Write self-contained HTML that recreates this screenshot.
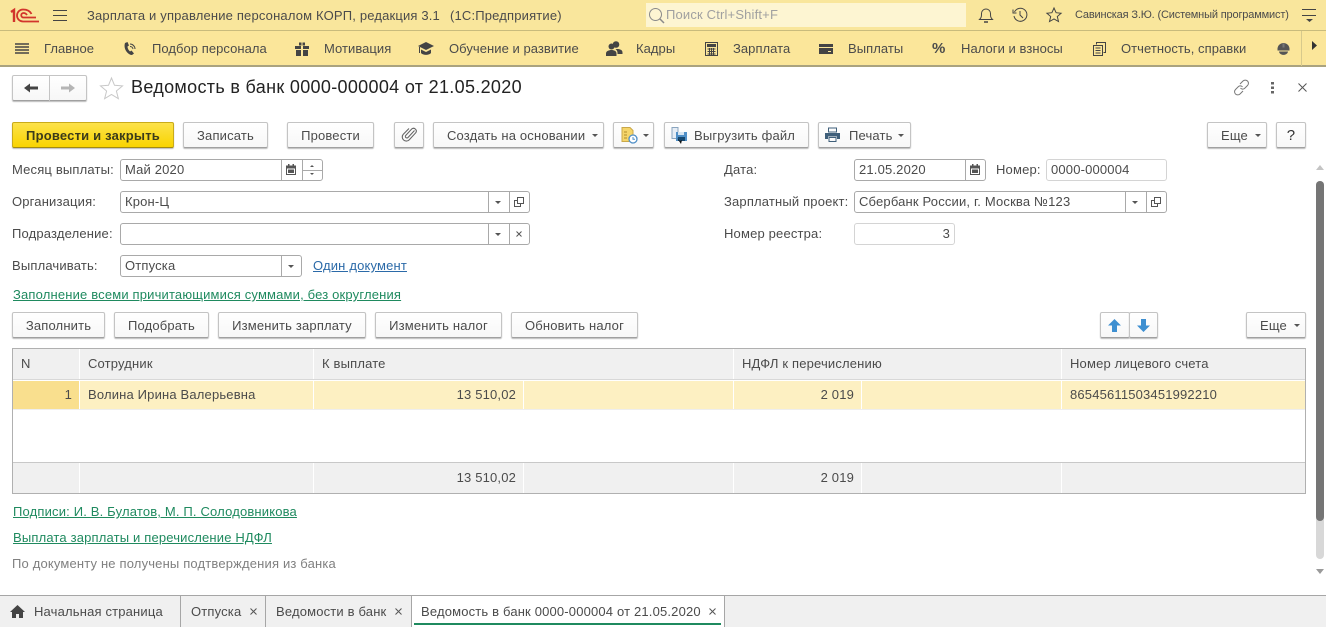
<!DOCTYPE html>
<html lang="ru"><head><meta charset="utf-8"><title>Ведомость в банк</title>
<style>
*{box-sizing:border-box}
html,body{margin:0;padding:0;width:1326px;height:627px;overflow:hidden;background:#fff}
body{font-family:"Liberation Sans",Arial,sans-serif;font-size:13px;color:#4b4b4b;position:relative;letter-spacing:.17px}
.a,.t,.b,.f,svg,.l{position:absolute}
.t{white-space:nowrap;line-height:16px}
.r{text-align:right}
.b{height:26px;background:linear-gradient(#fff,#f7f7f7);border:1px solid #c4c4c4;border-bottom:1px solid #a0a0a0;border-radius:2px;box-shadow:0 1px 1px #bbb;line-height:25px;text-align:center;white-space:nowrap}
.f{height:22px;border:1px solid #a9a9a9;border-radius:3px;background:#fff;line-height:20px;padding-left:4px;white-space:nowrap}
.f.lt{border-color:#d4d4d4}
.l{top:0;bottom:0;width:1px;background:#a9a9a9}
.tr{position:absolute;width:0;height:0;border-left:3px solid transparent;border-right:3px solid transparent;border-top:3px solid #555}
.g{color:#1f8a5f;text-decoration:underline}
svg{overflow:visible}
.nv{top:41px;letter-spacing:.05px}
</style></head><body>

<!-- top bar -->
<div class="a" style="left:0;top:0;width:1326px;height:31px;background:#f9e69c;border-bottom:1px solid #c9bb7c"></div>
<div class="a" style="left:0;top:31px;width:1326px;height:36px;background:#fbe69a;border-bottom:2px solid #aaa37f"></div>

<!-- 1C logo -->
<svg style="left:10px;top:8px" width="30" height="15" viewBox="0 0 30 15" fill="none" stroke="#d2342c" stroke-width="1.800">
<path d="M1 4l3-2v12" stroke-width="2.400"/><path d="M29 13.500H13A6 6 0 0 1 13 1.500C17 1.500 20 3 21.500 6"/><path d="M26 9.500H13.500A2.200 2.200 0 0 1 13.500 5C15 5 16 5.500 17 7"/>
</svg>
<svg style="left:53px;top:9px" width="15" height="13" stroke="#444" stroke-width="1"><path d="M0 1.500h14M0 6.500h14M0 11.500h14"/></svg>
<span class="t" style="left:87px;top:8px">Зарплата и управление персоналом КОРП, редакция 3.1</span>
<span class="t" style="left:450px;top:8px">(1С:Предприятие)</span>
<div class="a" style="left:646px;top:3px;width:320px;height:24px;background:#fdf5d2"></div>
<svg style="left:648px;top:7px" width="18" height="18" fill="none" stroke="#8a8a8a" stroke-width="1"><circle cx="7.500" cy="7.500" r="6"/><path d="M12 12l4 4" stroke-width="1.500"/></svg>
<span class="t" style="left:666px;top:7px;color:#a0a0a0">Поиск Ctrl+Shift+F</span>
<svg style="left:978px;top:6px" width="16" height="18" fill="none" stroke="#444"><path d="M1.500 13.500c2-2 2-3 2-6a4.500 4.500 0 0 1 9 0c0 3 0 4 2 6z"/><path d="M6 16h4" stroke-width="1.500"/></svg>
<svg style="left:1012px;top:7px" width="17" height="16" fill="none" stroke="#444"><path d="M2.500 5a6.500 6.500 0 1 1-.5 4"/><path d="M1 2.500v3.500h3.500" /><path d="M8 4v4l3 3"/></svg>
<svg style="left:1046px;top:7px" width="16" height="16" fill="none" stroke="#444"><path d="M8 1l2.100 4.700 5 .5-3.800 3.300 1.200 5L8 11.900l-4.500 2.600 1.200-5L.9 6.200l5-.5z"/></svg>
<span class="t" style="left:1075px;top:7px;font-size:11px;letter-spacing:-.16px">Савинская З.Ю. (Системный программист)</span>
<svg style="left:1302px;top:9px" width="15" height="14" stroke="#444"><path d="M0 .500h14M0 6.500h14"/><path d="M4 10h7l-3.500 3z" fill="#444" stroke="none"/></svg>

<!-- nav -->
<svg style="left:15px;top:43px" width="14" height="12" stroke="#444" stroke-width="1.500"><path d="M0 1h14M0 4h14M0 7h14M0 10h14"/></svg>
<span class="t nv" style="left:44px">Главное</span>
<svg style="left:123px;top:42px" width="14" height="15" fill="#444"><path d="M2 1l2.500-1 1.500 3.500-1.500 1c0 2 1 3.500 2.500 5l1.500-1 2.500 3-2 1.500C5 13 0 7 2 1z"/><path d="M7 2a5 5 0 0 1 5 5M7 4.500a3 3 0 0 1 3 2.500" fill="none" stroke="#444"/></svg>
<span class="t nv" style="left:152px">Подбор персонала</span>
<svg style="left:295px;top:42px" width="14" height="14" fill="#444"><path d="M0 4h6v3H0zM8 4h6v3H8zM1 8h5v6H1zM8 8h5v6H8z"/><path d="M4 .5h2.500v3H4zM7.500 .5H10v3H7.500z"/></svg>
<span class="t nv" style="left:324px">Мотивация</span>
<svg style="left:418px;top:42px" width="16" height="14" fill="#444"><path d="M0 4l8-4 8 4-8 4z"/><path d="M3 7.500l5 2.500 5-2.500V11c-2 2.500-8 2.500-10 0z"/><path d="M1 5h1v6H1z"/></svg>
<span class="t nv" style="left:449px">Обучение и развитие</span>
<svg style="left:606px;top:41px" width="17" height="15" fill="#444"><circle cx="10" cy="3.500" r="3.300"/><circle cx="5.500" cy="5.500" r="3"/><path d="M0 15v-2.500c0-2.500 3-3.500 5.500-3.500s5 1 5 3.500V15zM11.500 12c0-2-1-3-2-4 3 0 7 0 7 3.500V13h-5z"/></svg>
<span class="t nv" style="left:636px">Кадры</span>
<svg style="left:705px;top:42px" width="13" height="14" fill="none" stroke="#444"><rect x=".5" y=".5" width="12" height="13"/><path d="M2.500 2.500h8v2h-8z" fill="#444"/><path d="M2.500 7h8M2.500 9.500h8M2.500 12h8M4.500 6v7M6.500 6v7M8.500 6v7" stroke-width="1"/></svg>
<span class="t nv" style="left:733px">Зарплата</span>
<svg style="left:819px;top:44px" width="14" height="10" fill="#444"><path d="M0 0h14v3H0zM0 4h14v6H0z"/><path d="M9 7h3v1H9z" fill="#fbe69a"/></svg>
<span class="t nv" style="left:848px">Выплаты</span>
<span class="t" style="left:932px;top:41px;font-size:15px;font-weight:bold;letter-spacing:0">%</span>
<span class="t nv" style="left:961px">Налоги и взносы</span>
<svg style="left:1093px;top:42px" width="13" height="14" fill="none" stroke="#444"><path d="M3.500 2.500V.5h9v10h-2"/><path d="M.5 3.500h9v10h-9z"/><path d="M2.500 6h5M2.500 8.500h5M2.500 11h5"/></svg>
<span class="t nv" style="left:1121px">Отчетность, справки</span>
<svg style="left:1277px;top:42px" width="13" height="15" fill="#555"><path d="M.5 7a6 6 0 0 1 12 0v1.500H.5z"/><path d="M2 9.500h9c-.5 4.500-8.500 4.500-9 0z"/><path d="M5.500 1.500h2v4h-2z" fill="#777"/></svg>
<div class="a" style="left:1301px;top:31px;width:1px;height:35px;background:#d7c98c"></div>
<svg style="left:1312px;top:41px" width="5" height="9" fill="#333"><path d="M0 0l5 4.500L0 9z"/></svg>

<!-- title row -->
<div class="b" style="left:12px;top:75px;width:75px;height:26px"></div>
<div class="a" style="left:49px;top:75px;width:1px;height:26px;background:#c4c4c4"></div>
<svg style="left:24px;top:83px" width="15" height="10" fill="#444"><path d="M0 5l6-4.500V3.500h8v3H6v3z"/></svg>
<svg style="left:60px;top:83px" width="15" height="10" fill="#b5b5b5"><path d="M15 5L9 .5V3.500H1v3h8v3z"/></svg>
<svg style="left:100px;top:77px" width="23" height="22" fill="#fff" stroke="#c8c8c8"><path d="M11.500 1l3 7.300 8 .6-6.100 5.100 2 7.700-6.900-4.200-6.900 4.200 2-7.700L.5 8.900l8-.6z"/></svg>
<span class="t" style="left:131px;top:76px;font-size:18px;line-height:22px;color:#222;letter-spacing:.32px">Ведомость в банк 0000-000004 от 21.05.2020</span>
<svg style="left:1233px;top:79px" width="17" height="17" fill="none" stroke="#777"><path d="M7 5l3-3a2.800 2.800 0 0 1 4.500 4.500l-3 3a2.800 2.800 0 0 1-4-.5"/><path d="M10 12l-3 3a2.800 2.800 0 0 1-4.500-4.500l3-3a2.800 2.800 0 0 1 4 .5"/></svg>
<svg style="left:1271px;top:82px" width="3" height="12" fill="#666"><rect width="3" height="2.500"/><rect y="4.500" width="3" height="2.500"/><rect y="9" width="3" height="2.500"/></svg>
<svg style="left:1298px;top:83px" width="9" height="9" stroke="#555"><path d="M.5 .5l8 8M8.500 .5l-8 8"/></svg>

<!-- command bar -->
<div class="b" style="left:12px;top:122px;width:162px;background:linear-gradient(#fce24a,#f9d400);border-color:#c9ab1a;border-bottom-color:#a38b10;font-weight:bold;color:#3b3b1a;letter-spacing:.2px">Провести и закрыть</div>
<div class="b" style="left:183px;top:122px;width:85px">Записать</div>
<div class="b" style="left:287px;top:122px;width:87px">Провести</div>
<div class="b" style="left:394px;top:122px;width:30px"></div>
<svg style="left:402px;top:127px" width="15" height="16" fill="none" stroke="#666" stroke-width="1.100"><path d="M12.500 3.500L6 10.500a1.500 1.500 0 0 1-2.200-2.100l6-6.500a2.800 2.800 0 0 1 4 3.800l-6.500 7a4 4 0 0 1-6-5.400L7 1.500"/></svg>
<div class="b" style="left:433px;top:122px;width:171px;text-align:left;padding-left:13px">Создать на основании</div>
<i class="tr" style="left:592px;top:134px"></i>
<div class="b" style="left:613px;top:122px;width:41px"></div>
<svg style="left:621px;top:127px" width="17" height="17"><path d="M1 .5h8l3 3v11H1z" fill="#f5d56a" stroke="#c9a84a"/><path d="M3 5h3M3 8h3M3 11h3" stroke="#b08a2a"/><circle cx="12" cy="12" r="4" fill="#fff" stroke="#4f8fc7" stroke-width="1.300"/><path d="M12 10v2.300h2" stroke="#4f8fc7" fill="none"/></svg>
<i class="tr" style="left:643px;top:134px"></i>
<div class="b" style="left:664px;top:122px;width:145px;text-align:left;padding-left:29px">Выгрузить файл</div>
<svg style="left:671px;top:127px" width="17" height="17"><path d="M1 .5h6v11H1z" fill="#e6edf5" stroke="#8aa5bf"/><path d="M5 5h11v9H5z" fill="#4f8fc7"/><path d="M7 5h6v3H7z" fill="#d8e6f2"/><path d="M7 10h7v4H7z" fill="#16486f"/><path d="M6 11l3 3 2-1-1 4z" fill="#111"/></svg>
<div class="b" style="left:818px;top:122px;width:93px;text-align:left;padding-left:30px">Печать</div>
<svg style="left:825px;top:128px" width="15" height="14" fill="#3f5f7a"><path d="M3.500 0h8v4h-8z" fill="none" stroke="#3f5f7a"/><path d="M0 5h15v6h-3V8.500H3V11H0z"/><path d="M4 9.500h7v4H4z" fill="none" stroke="#3f5f7a"/></svg>
<i class="tr" style="left:898px;top:134px"></i>
<div class="b" style="left:1207px;top:122px;width:60px;text-align:left;padding-left:13px">Еще</div>
<i class="tr" style="left:1255px;top:134px"></i>
<div class="b" style="left:1276px;top:122px;width:30px;font-size:15px;color:#333">?</div>

<!-- left form -->
<span class="t" style="left:12px;top:162px">Месяц выплаты:</span>
<div class="f" style="left:120px;top:159px;width:203px">Май 2020<div class="l" style="left:160px"></div><div class="l" style="left:181px"></div><div class="a" style="left:181px;top:10px;width:21px;height:1px;background:#a9a9a9"></div></div>
<svg style="left:286px;top:164px" width="10" height="11" fill="#555"><path d="M0 1.500h10V11H0zM1 4.500v5.500h8V4.500z" fill-rule="evenodd"/><path d="M2 0h1.500v2.500H2zM6.500 0H8v2.500H6.500zM2 5.500h6v3.500H2z"/></svg>
<svg style="left:309px;top:164px" width="6" height="11" fill="#555"><path d="M3 1l2 2H1zM1 9h4l-2 2z"/></svg>
<span class="t" style="left:12px;top:194px">Организация:</span>
<div class="f" style="left:120px;top:191px;width:410px">Крон-Ц<div class="l" style="left:367px"></div><div class="l" style="left:388px"></div></div>
<i class="tr" style="left:495px;top:201px"></i>
<svg style="left:514px;top:197px" width="10" height="10" fill="none" stroke="#555"><path d="M3.500 .5h6v6h-6zM3 3.500H.5v6h6V7"/></svg>
<span class="t" style="left:12px;top:226px">Подразделение:</span>
<div class="f" style="left:120px;top:223px;width:410px"><div class="l" style="left:367px"></div><div class="l" style="left:388px"></div></div>
<i class="tr" style="left:495px;top:233px"></i>
<svg style="left:516px;top:231px" width="7" height="7" stroke="#555"><path d="M.5 .5l5 5M5.500 .5l-5 5"/></svg>
<span class="t" style="left:12px;top:258px">Выплачивать:</span>
<div class="f" style="left:120px;top:255px;width:182px">Отпуска<div class="l" style="left:160px"></div></div>
<i class="tr" style="left:288px;top:265px"></i>
<span class="t" style="left:313px;top:258px;color:#2b6aa8;text-decoration:underline">Один документ</span>
<span class="t g" style="left:13px;top:287px">Заполнение всеми причитающимися суммами, без округления</span>

<!-- right form -->
<span class="t" style="left:724px;top:162px">Дата:</span>
<div class="f" style="left:854px;top:159px;width:132px">21.05.2020<div class="l" style="left:110px"></div></div>
<svg style="left:970px;top:164px" width="10" height="11" fill="#555"><path d="M0 1.500h10V11H0zM1 4.500v5.500h8V4.500z" fill-rule="evenodd"/><path d="M2 0h1.500v2.500H2zM6.500 0H8v2.500H6.500zM2 5.500h6v3.500H2z"/></svg>
<span class="t" style="left:996px;top:162px">Номер:</span>
<div class="f lt" style="left:1046px;top:159px;width:121px">0000-000004</div>
<span class="t" style="left:724px;top:194px">Зарплатный проект:</span>
<div class="f" style="left:854px;top:191px;width:313px">Сбербанк России, г. Москва №123<div class="l" style="left:270px"></div><div class="l" style="left:291px"></div></div>
<i class="tr" style="left:1132px;top:201px"></i>
<svg style="left:1151px;top:197px" width="10" height="10" fill="none" stroke="#555"><path d="M3.500 .5h6v6h-6zM3 3.500H.5v6h6V7"/></svg>
<span class="t" style="left:724px;top:226px">Номер реестра:</span>
<div class="f lt" style="left:854px;top:223px;width:101px;text-align:right;padding-right:4px">3</div>

<!-- table commands -->
<div class="b" style="left:12px;top:312px;width:93px">Заполнить</div>
<div class="b" style="left:114px;top:312px;width:95px">Подобрать</div>
<div class="b" style="left:218px;top:312px;width:148px">Изменить зарплату</div>
<div class="b" style="left:375px;top:312px;width:127px">Изменить налог</div>
<div class="b" style="left:511px;top:312px;width:127px">Обновить налог</div>
<div class="b" style="left:1100px;top:312px;width:30px"></div>
<div class="b" style="left:1129px;top:312px;width:29px"></div>
<svg style="left:1108px;top:319px" width="13" height="13" fill="#3d8fd1"><path d="M6.500 0L13 6.500H9V13H4V6.500H0z"/></svg>
<svg style="left:1137px;top:319px" width="13" height="13" fill="#3d8fd1"><path d="M6.500 13L13 6.500H9V0H4v6.500H0z"/></svg>
<div class="b" style="left:1246px;top:312px;width:60px;text-align:left;padding-left:13px">Еще</div>
<i class="tr" style="left:1294px;top:324px"></i>

<!-- table -->
<div class="a" style="left:12px;top:348px;width:1294px;height:146px;border:1px solid #b0b0b0;background:#fff"></div>
<div class="a" style="left:13px;top:349px;width:1292px;height:30px;background:#f0f0f0"></div>
<div class="a" style="left:13px;top:379px;width:1292px;height:1px;background:#d8d8d8"></div>
<div class="a" style="left:13px;top:381px;width:1292px;height:28px;background:#fdf0c2"></div>
<div class="a" style="left:13px;top:381px;width:66px;height:28px;background:#f9df8e"></div>
<div class="a" style="left:13px;top:409px;width:1292px;height:1px;background:#eee"></div>
<div class="a" style="left:13px;top:462px;width:1292px;height:1px;background:#c8c8c8"></div>
<div class="a" style="left:13px;top:463px;width:1292px;height:30px;background:#f0f0f0"></div>
<div class="a" style="left:79px;top:349px;width:1px;height:30px;background:#fff"></div>
<div class="a" style="left:313px;top:349px;width:1px;height:30px;background:#fff"></div>
<div class="a" style="left:733px;top:349px;width:1px;height:30px;background:#fff"></div>
<div class="a" style="left:1061px;top:349px;width:1px;height:30px;background:#fff"></div>
<div class="a" style="left:79px;top:381px;width:1px;height:28px;background:#fff"></div>
<div class="a" style="left:313px;top:381px;width:1px;height:28px;background:#fff"></div>
<div class="a" style="left:523px;top:381px;width:1px;height:28px;background:#fff"></div>
<div class="a" style="left:733px;top:381px;width:1px;height:28px;background:#fff"></div>
<div class="a" style="left:861px;top:381px;width:1px;height:28px;background:#fff"></div>
<div class="a" style="left:1061px;top:381px;width:1px;height:28px;background:#fff"></div>
<div class="a" style="left:79px;top:463px;width:1px;height:30px;background:#fff"></div>
<div class="a" style="left:313px;top:463px;width:1px;height:30px;background:#fff"></div>
<div class="a" style="left:523px;top:463px;width:1px;height:30px;background:#fff"></div>
<div class="a" style="left:733px;top:463px;width:1px;height:30px;background:#fff"></div>
<div class="a" style="left:861px;top:463px;width:1px;height:30px;background:#fff"></div>
<div class="a" style="left:1061px;top:463px;width:1px;height:30px;background:#fff"></div>
<span class="t" style="left:21px;top:356px">N</span>
<span class="t" style="left:88px;top:356px">Сотрудник</span>
<span class="t" style="left:322px;top:356px">К выплате</span>
<span class="t" style="left:742px;top:356px">НДФЛ к перечислению</span>
<span class="t" style="left:1070px;top:356px">Номер лицевого счета</span>
<span class="t r" style="right:1254px;top:387px">1</span>
<span class="t" style="left:88px;top:387px">Волина Ирина Валерьевна</span>
<span class="t r" style="right:810px;top:387px">13 510,02</span>
<span class="t r" style="right:472px;top:387px">2 019</span>
<span class="t" style="left:1070px;top:387px">86545611503451992210</span>
<span class="t r" style="right:810px;top:470px">13 510,02</span>
<span class="t r" style="right:472px;top:470px">2 019</span>

<span class="t g" style="left:13px;top:504px">Подписи: И. В. Булатов, М. П. Солодовникова</span>
<span class="t g" style="left:13px;top:530px">Выплата зарплаты и перечисление НДФЛ</span>
<span class="t" style="left:12px;top:556px;color:#808080">По документу не получены подтверждения из банка</span>

<!-- scrollbar -->
<svg style="left:1316px;top:165px" width="8" height="6" fill="#c4c4c4"><path d="M4 0l4 5H0z"/></svg>
<div class="a" style="left:1316px;top:181px;width:8px;height:378px;background:#d8d8d8;border-radius:4px"></div>
<div class="a" style="left:1316px;top:181px;width:8px;height:340px;background:#757575;border-radius:4px"></div>
<svg style="left:1316px;top:569px" width="8" height="6" fill="#9a9a9a"><path d="M0 0h8L4 5z"/></svg>

<!-- tabs -->
<div class="a" style="left:0;top:595px;width:1326px;height:32px;background:#f0f0f0;border-top:1px solid #a6a6a6"></div>
<div class="a" style="left:180px;top:596px;width:1px;height:31px;background:#a6a6a6"></div>
<div class="a" style="left:265px;top:596px;width:1px;height:31px;background:#a6a6a6"></div>
<div class="a" style="left:411px;top:596px;width:314px;height:31px;background:#fff;border-left:1px solid #a6a6a6;border-right:1px solid #a6a6a6"></div>
<div class="a" style="left:414px;top:623px;width:307px;height:2px;background:#1f8a5f"></div>
<svg style="left:10px;top:605px" width="15" height="13" fill="#444"><path d="M7.500 0L15 7h-2v6H9V9H6v4H2V7H0z"/></svg>
<span class="t" style="left:34px;top:604px">Начальная страница</span>
<span class="t" style="left:191px;top:604px">Отпуска</span>
<svg style="left:250px;top:608px" width="8" height="8" stroke="#555"><path d="M.5 .5l6 6M6.500 .5l-6 6"/></svg>
<span class="t" style="left:276px;top:604px">Ведомости в банк</span>
<svg style="left:395px;top:608px" width="8" height="8" stroke="#555"><path d="M.5 .5l6 6M6.500 .5l-6 6"/></svg>
<span class="t" style="left:421px;top:604px">Ведомость в банк 0000-000004 от 21.05.2020</span>
<svg style="left:709px;top:608px" width="8" height="8" stroke="#555"><path d="M.5 .5l6 6M6.500 .5l-6 6"/></svg>
</body></html>
